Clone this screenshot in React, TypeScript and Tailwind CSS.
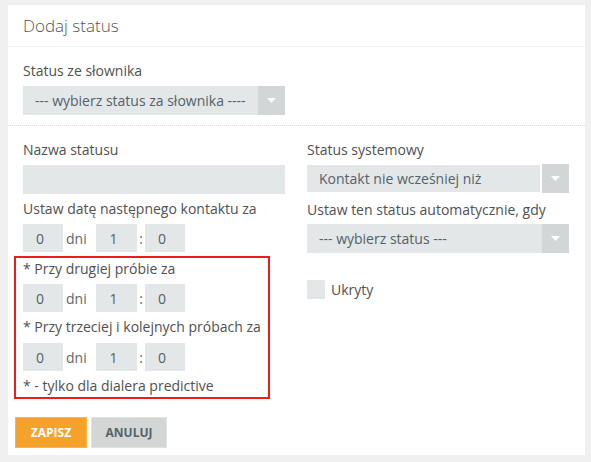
import React from 'react'

const font = { fontFamily: '"Open Sans", "Liberation Sans", sans-serif' }

function Caret() {
  return (
    <svg width="9" height="5" viewBox="0 0 9 5">
      <path d="M0 0 H9 L4.5 5 Z" fill="#ffffff" />
    </svg>
  )
}

function Select({ text, joined }: { text: string; joined?: boolean }) {
  return (
    <div className="flex h-[29px] w-full">
      <div
        className={
          'flex flex-1 items-center bg-[#e4e7e7] pl-[12px] text-[14px] text-[#52626a] ' +
          (joined ? '' : 'my-[1px] mr-[2px]')
        }
      >
        {text}
      </div>
      <div className="flex w-[27px] items-center justify-center bg-[#d3d6d6]">
        <Caret />
      </div>
    </div>
  )
}

function NumBox({ value, wide }: { value: string; wide?: boolean }) {
  return (
    <div
      className={
        'flex h-[28px] items-center justify-center bg-[#e4e7e7] pr-[6px] text-[14px] text-[#52626a] ' +
        (wide ? 'w-[41px]' : 'w-[40px]')
      }
    >
      {value}
    </div>
  )
}

function TimeRow() {
  return (
    <div className="flex items-center">
      <NumBox value="0" />
      <span className="ml-[3px] w-[30px] text-[14px] text-[#666]">dni</span>
      <NumBox value="1" wide />
      <span className="w-[8px] text-center text-[14px] text-[#666]">:</span>
      <NumBox value="0" />
    </div>
  )
}

function Label({ children, className = '' }: { children: React.ReactNode; className?: string }) {
  return <div className={'text-[14px] leading-[20px] text-[#505050] ' + className}>{children}</div>
}

export default function App() {
  return (
    <div className="min-h-[462px] bg-[#eff0ef] pl-[8px] pt-[5px]" style={font}>
      <div className="flex h-[450px] w-[577px] flex-col bg-white">
        {/* header */}
        <div className="flex h-[42px] items-center border-b border-[#f3f3f3] pl-[15px] text-[17px] font-light text-[#555]">
          Dodaj status
        </div>

        {/* dictionary status */}
        <div className="border-b border-dotted border-[#d8d8d8] pb-[10px] pl-[15px] pt-[14px]">
          <Label>Status ze słownika</Label>
          <div className="mt-[5px] w-[262px]">
            <Select text="--- wybierz status za słownika ----" joined />
          </div>
        </div>

        {/* two columns */}
        <div className="grid grid-cols-[262px_262px] gap-x-[22px] pl-[15px] pt-[14px]">
          <div className="flex flex-col">
            <Label>Nazwa statusu</Label>
            <div className="mt-[5px] h-[29px] bg-[#e4e7e7]" />
            <Label className="mt-[5px]">Ustaw datę następnego kontaktu za</Label>
            <div className="mt-[5px]">
              <TimeRow />
            </div>
            <div className="-ml-[9px] mt-[4px] w-[256px] border-2 border-[#ee1c1c] pb-[1px] pl-[7px] pt-[1px]">
              <Label>* Przy drugiej próbie za</Label>
              <div className="mt-[5px]">
                <TimeRow />
              </div>
              <Label className="mt-[5px]">* Przy trzeciej i kolejnych próbach za</Label>
              <div className="mt-[6px]">
                <TimeRow />
              </div>
              <Label className="mt-[5px]">* - tylko dla dialera predictive</Label>
            </div>
          </div>

          <div className="flex flex-col">
            <Label>Status systemowy</Label>
            <div className="mt-[4px]">
              <Select text="Kontakt nie wcześniej niż" />
            </div>
            <Label className="mt-[7px]">Ustaw ten status automatycznie, gdy</Label>
            <div className="mt-[4px]">
              <Select text="--- wybierz status ---" joined />
            </div>
            <div className="mt-[26px] flex items-center">
              <div className="h-[19px] w-[18px] bg-[#e4e7e7]" />
              <span className="ml-[6px] text-[14px] text-[#505050]">Ukryty</span>
            </div>
          </div>
        </div>

        {/* buttons */}
        <div className="mt-auto flex gap-[4px] pb-[7px] pl-[7px]">
          <button className="h-[31px] w-[72px] border border-[#f8b552] bg-[#f6a22a] text-[12px] font-bold text-white">
            ZAPISZ
          </button>
          <button className="h-[31px] w-[76px] border border-[#e0e2e2] bg-[#d4d6d6] text-[12px] font-bold text-[#52626a]">
            ANULUJ
          </button>
        </div>
      </div>
    </div>
  )
}
